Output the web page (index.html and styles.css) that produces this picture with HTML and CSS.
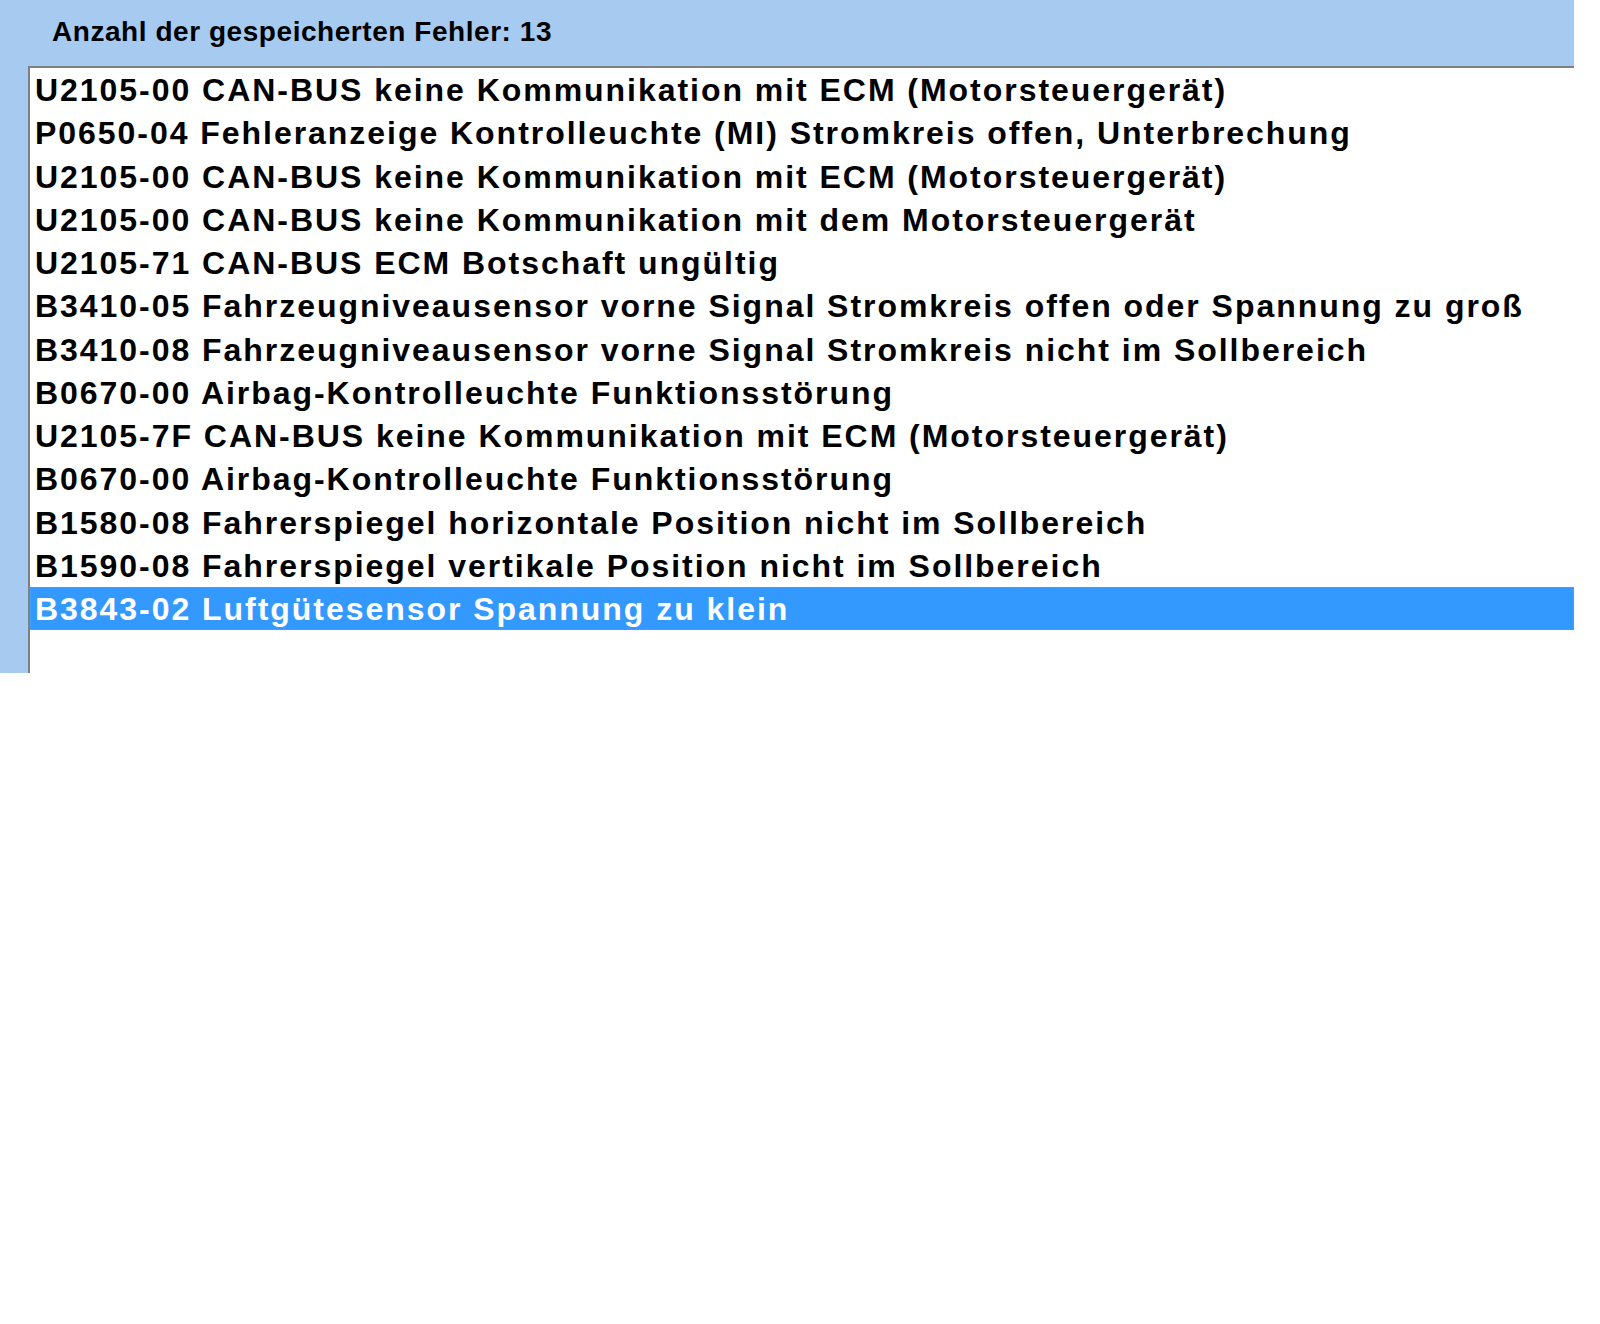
FILE: index.html
```html
<!DOCTYPE html>
<html lang="de">
<head>
  <meta charset="UTF-8" />
  <title>Fehlerspeicher</title>
  <link rel="stylesheet" href="styles.css">
</head>
<body>

  <div class="panel">
    <div class="count">Anzahl der gespeicherten Fehler: 13</div>

    <ul class="fault-list">
      <li>U2105-00 CAN-BUS keine Kommunikation mit ECM (Motorsteuergerät)</li>
      <li>P0650-04 Fehleranzeige Kontrolleuchte (MI) Stromkreis offen, Unterbrechung</li>
      <li>U2105-00 CAN-BUS keine Kommunikation mit ECM (Motorsteuergerät)</li>
      <li>U2105-00 CAN-BUS keine Kommunikation mit dem Motorsteuergerät</li>
      <li>U2105-71 CAN-BUS ECM Botschaft ungültig</li>
      <li>B3410-05 Fahrzeugniveausensor vorne Signal Stromkreis offen oder Spannung zu groß</li>
      <li>B3410-08 Fahrzeugniveausensor vorne Signal Stromkreis nicht im Sollbereich</li>
      <li>B0670-00 Airbag-Kontrolleuchte Funktionsstörung</li>
      <li>U2105-7F CAN-BUS keine Kommunikation mit ECM (Motorsteuergerät)</li>
      <li>B0670-00 Airbag-Kontrolleuchte Funktionsstörung</li>
      <li>B1580-08 Fahrerspiegel horizontale Position nicht im Sollbereich</li>
      <li>B1590-08 Fahrerspiegel vertikale Position nicht im Sollbereich</li>
      <li class="selected">B3843-02 Luftgütesensor Spannung zu klein</li>
    </ul>
  </div>

</body>
</html>
```

FILE: styles.css
```css
* {
  margin: 0;
  padding: 0;
  box-sizing: border-box;
  font-family: "Liberation Sans", Arial, sans-serif;
}

body {
  background-color: #ffffff;
}

.panel {
  width: 1574px;
  height: 673px;
  background-color: #a6caf0;
  overflow: hidden;
}

.count {
  height: 66px;
  padding: 16px 0 0 52px;
  font-size: 28px;
  font-weight: bold;
  letter-spacing: 0.55px;
  color: #000;
}

.fault-list {
  list-style: none;
  margin-left: 28px;
  height: 607px;
  background-color: #fff;
  border-top: 2px solid #808080;
  border-left: 2px solid #808080;
}

.fault-list li {
  height: 43.25px;
  line-height: 44px;
  padding-left: 5px;
  font-size: 32px;
  font-weight: bold;
  letter-spacing: 1.96px;
  color: #000;
  white-space: nowrap;
}

.fault-list li.selected {
  background-color: #3399ff;
  color: #fff;
  outline: 1px dotted #c98a3a;
  outline-offset: -1px;
}
```
